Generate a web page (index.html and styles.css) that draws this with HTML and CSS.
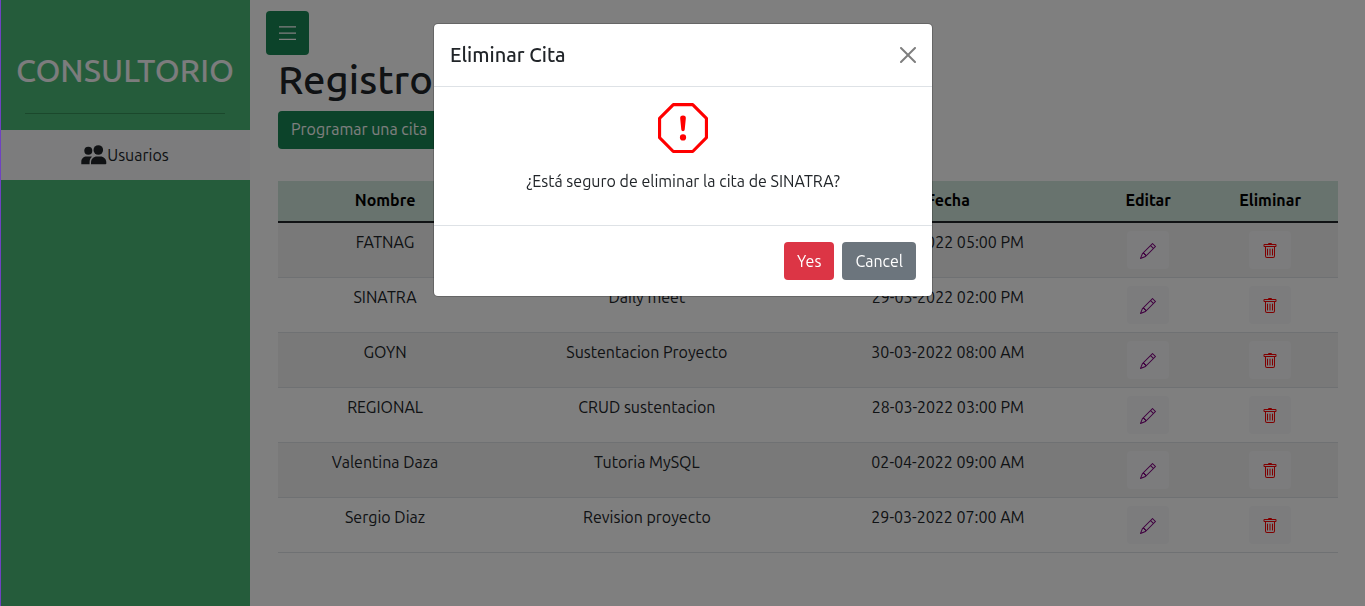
FILE: index.html
```
<!DOCTYPE html>
<html lang="es">
<head>
<meta charset="utf-8">
<meta name="viewport" content="width=device-width, initial-scale=1">
<title>Consultorio</title>
<link rel="stylesheet" href="styles.css">
</head>
<body>
<svg class="sprite" aria-hidden="true">
  <symbol id="pencil" viewBox="0 0 16 16"><path d="M12.146.146a.5.5 0 0 1 .708 0l3 3a.5.5 0 0 1 0 .708l-10 10a.5.5 0 0 1-.168.11l-5 2a.5.5 0 0 1-.65-.65l2-5a.5.5 0 0 1 .11-.168l10-10zM11.207 2.5 13.5 4.793 14.793 3.5 12.5 1.207 11.207 2.5zm1.586 3L10.5 3.207 4 9.707V10h.5a.5.5 0 0 1 .5.5v.5h.5a.5.5 0 0 1 .5.5v.5h.293l6.5-6.5zm-9.761 5.175-.106.106-1.528 3.821 3.821-1.528.106-.106A.5.5 0 0 1 5 12.5V12h-.5a.5.5 0 0 1-.5-.5V11h-.5a.5.5 0 0 1-.468-.325z"/></symbol>
  <symbol id="trash" viewBox="0 0 16 16"><path d="M5.500 5.500A.5.5 0 0 1 6 6v6a.5.5 0 0 1-1 0V6a.5.5 0 0 1 .5-.5zm2.500 0a.5.5 0 0 1 .5.5v6a.5.5 0 0 1-1 0V6a.5.5 0 0 1 .5-.5zm3 .5a.5.5 0 0 0-1 0v6a.5.5 0 0 0 1 0V6z"/><path fill-rule="evenodd" d="M14.500 3a1 1 0 0 1-1 1H13v9a2 2 0 0 1-2 2H5a2 2 0 0 1-2-2V4h-.5a1 1 0 0 1-1-1V2a1 1 0 0 1 1-1H6a1 1 0 0 1 1-1h2a1 1 0 0 1 1 1h3.500a1 1 0 0 1 1 1v1zM4.118 4 4 4.059V13a1 1 0 0 0 1 1h6a1 1 0 0 0 1-1V4.059L11.882 4H4.118zM2.500 3V2h11v1h-11z"/></symbol>
</svg>
<div class="layout">
  <aside class="sidebar">
    <div class="brand">
      <h2 class="brand-name">CONSULTORIO</h2>
      <hr class="brand-rule">
    </div>
    <nav>
      <a class="nav-item" href="#usuarios">
        <svg class="nav-icon" viewBox="0 0 26 20" aria-hidden="true"><circle cx="7.300" cy="5.800" r="4"/><circle cx="17.300" cy="5" r="4.800"/><path d="M.3 19.300v-2.600c0-3.200 2.300-5.200 5.400-5.200h3.600c.6 0 1.200.1 1.700.3-1.500 1.300-2.400 3.200-2.400 5.400v2.100Z"/><path d="M10 19.300v-1.800c0-3.500 2.600-5.900 6-5.900h3.300c3.400 0 6 2.400 6 5.900v1c0 .5-.4.8-.8.8Z"/></svg>
        <span>Usuarios</span>
      </a>
    </nav>
  </aside>
  <main class="content">
    <button class="btn btn-green menu-btn" type="button" aria-label="Menu">
      <svg class="menu-icon" viewBox="0 0 18 16" aria-hidden="true"><path d="M0 1.300h17v1.200H0zM0 7.500h17v1.200H0zM0 13.700h17v1.200H0z"/></svg>
    </button>
    <section class="records">
      <h1 class="page-title">Registro</h1>
      <button class="btn btn-green add-btn" type="button">Programar una cita</button>
      <table class="table">
        <colgroup><col class="c-name"><col class="c-reason"><col class="c-date"><col class="c-edit"><col class="c-delete"></colgroup>
        <thead><tr><th>Nombre</th><th>Motivo</th><th>Fecha</th><th>Editar</th><th>Eliminar</th></tr></thead>
        <tbody>
          <tr><td>FATNAG</td><td>Reunion</td><td>29-03-2022 05:00 PM</td><td><button class="btn btn-light edit" type="button" aria-label="Editar"><svg class="icon"><use href="#pencil"/></svg></button></td><td><button class="btn btn-light delete" type="button" aria-label="Eliminar"><svg class="icon"><use href="#trash"/></svg></button></td></tr>
          <tr><td>SINATRA</td><td>Daily meet</td><td>29-03-2022 02:00 PM</td><td><button class="btn btn-light edit" type="button" aria-label="Editar"><svg class="icon"><use href="#pencil"/></svg></button></td><td><button class="btn btn-light delete" type="button" aria-label="Eliminar"><svg class="icon"><use href="#trash"/></svg></button></td></tr>
          <tr><td>GOYN</td><td>Sustentacion Proyecto</td><td>30-03-2022 08:00 AM</td><td><button class="btn btn-light edit" type="button" aria-label="Editar"><svg class="icon"><use href="#pencil"/></svg></button></td><td><button class="btn btn-light delete" type="button" aria-label="Eliminar"><svg class="icon"><use href="#trash"/></svg></button></td></tr>
          <tr><td>REGIONAL</td><td>CRUD sustentacion</td><td>28-03-2022 03:00 PM</td><td><button class="btn btn-light edit" type="button" aria-label="Editar"><svg class="icon"><use href="#pencil"/></svg></button></td><td><button class="btn btn-light delete" type="button" aria-label="Eliminar"><svg class="icon"><use href="#trash"/></svg></button></td></tr>
          <tr><td>Valentina Daza</td><td>Tutoria MySQL</td><td>02-04-2022 09:00 AM</td><td><button class="btn btn-light edit" type="button" aria-label="Editar"><svg class="icon"><use href="#pencil"/></svg></button></td><td><button class="btn btn-light delete" type="button" aria-label="Eliminar"><svg class="icon"><use href="#trash"/></svg></button></td></tr>
          <tr><td>Sergio Diaz</td><td>Revision proyecto</td><td>29-03-2022 07:00 AM</td><td><button class="btn btn-light edit" type="button" aria-label="Editar"><svg class="icon"><use href="#pencil"/></svg></button></td><td><button class="btn btn-light delete" type="button" aria-label="Eliminar"><svg class="icon"><use href="#trash"/></svg></button></td></tr>
        </tbody>
      </table>
    </section>
  </main>
</div>
<div class="backdrop">
  <div class="modal" role="dialog" aria-modal="true" aria-labelledby="modal-title">
    <header class="modal-header">
      <h5 class="modal-title" id="modal-title">Eliminar Cita</h5>
      <button class="close" type="button" aria-label="Close"><svg class="icon" viewBox="0 0 16 16"><path d="M.293.293a1 1 0 0 1 1.414 0L8 6.586 14.293.293a1 1 0 1 1 1.414 1.414L9.414 8l6.293 6.293a1 1 0 0 1-1.414 1.414L8 9.414l-6.293 6.293a1 1 0 0 1-1.414-1.414L6.586 8 .293 1.707a1 1 0 0 1 0-1.414z"/></svg></button>
    </header>
    <div class="modal-body">
      <svg class="alert-icon" viewBox="0 0 16 16" aria-hidden="true"><path d="M4.540.146A.5.5 0 0 1 4.893 0h6.214a.5.5 0 0 1 .353.146l4.394 4.394a.5.5 0 0 1 .146.353v6.214a.5.5 0 0 1-.146.353l-4.394 4.394a.5.5 0 0 1-.353.146H4.893a.5.5 0 0 1-.353-.146L.146 11.460A.5.5 0 0 1 0 11.107V4.893a.5.5 0 0 1 .146-.353L4.540.146zM5.100 1 1 5.100v5.800L5.100 15h5.800l4.100-4.100V5.100L10.900 1H5.100z"/><path d="M7.002 11a1 1 0 1 1 2 0 1 1 0 0 1-2 0zM7.100 4.995a.905.905 0 1 1 1.800 0l-.350 3.507a.552.552 0 0 1-1.100 0L7.100 4.995z"/></svg>
      <p class="message">¿Está seguro de eliminar la cita de SINATRA?</p>
    </div>
    <footer class="modal-footer">
      <button class="btn btn-danger" type="button">Yes</button>
      <button class="btn btn-secondary" type="button">Cancel</button>
    </footer>
  </div>
</div>
</body>
</html>
```
FILE: styles.css
```
*, *::before, *::after { box-sizing: border-box; }
body {
  margin: 0;
  font: 400 16px/24px Ubuntu, "Noto Sans", "Open Sans", sans-serif;
  color: #212529;
  background: #fff;
}
h1, h2, h5, p { margin: 0; }
.sprite { display: none; }
.icon { display: block; width: 16px; height: 16px; fill: currentColor; }

.layout { display: flex; min-height: 100vh; }
.sidebar { flex: 0 0 250px; background: #4ab876; }
.brand { display: flex; flex-direction: column; gap: 24px; padding: 51px 0 16px; }
.brand-name { color: #f8f9fa; font-size: 32px; font-weight: 550; line-height: 38px; text-align: center; }
.brand-rule { width: 200px; height: 1px; margin: 0 auto; border: 0; background: #379058; }
.nav-item {
  display: flex; align-items: center; justify-content: center;
  height: 50px; background: #f8f9fa; color: #212529; text-decoration: none;
}
.nav-icon { width: 26px; height: 20px; fill: currentColor; }

.content { flex: 1; min-width: 0; padding: 11px 27px 16px 16px; }
.records { padding: 1px 0 0 12px; }
.page-title { margin-bottom: 7px; font-size: 40px; font-weight: 550; line-height: 48px; }

.btn {
  padding: 6px 12px; border: 1px solid transparent; border-radius: 4px;
  font: inherit; color: #fff; cursor: pointer;
}
.btn-green { background: #198754; }
.add-btn { padding: 5px 12px 7px; }
.btn-danger { background: #dc3545; }
.btn-secondary { background: #6c757d; }
.btn-light { display: block; height: 38px; margin: 1px auto 0; padding: 8px 12px 6px; background: #f8f9fa; }
.edit { color: purple; }
.delete { color: red; }
.menu-btn { display: block; width: 43px; height: 44px; padding: 0; }
.menu-icon { display: block; width: 18px; height: 16px; margin: 0 auto; fill: #fff; }

.table { width: 100%; margin-top: 32px; border-collapse: collapse; table-layout: fixed; text-align: center; }
.c-name { width: 20.2%; }
.c-reason { width: 29.2%; }
.c-date { width: 27.6%; }
.c-edit { width: 10.2%; }
.c-delete { width: 12.8%; }
.table th { height: 41px; padding: 7px 8px 8px; vertical-align: top; background: #d1e7dd; color: #000; font-weight: 700; line-height: 24px; border-bottom: 2px solid #212529; }
.table td { height: 55px; padding: 7px 8px; vertical-align: top; border-bottom: 1px solid #dee2e6; }
.table tbody tr:nth-child(odd) { background: #f2f2f2; }

.backdrop {
  position: fixed; inset: 0; padding: 23px 16px;
  background: rgba(0, 0, 0, .5); border-left: 1px solid #6f42c1;
}
.modal {
  max-width: 500px; margin: 0 auto; background: #fff; background-clip: padding-box;
  border: 1px solid rgba(0, 0, 0, .2); border-radius: 5px;
}
.modal-header { display: flex; align-items: center; justify-content: space-between; padding: 16px; border-bottom: 1px solid #dee2e6; }
.modal-title { font-size: 20px; font-weight: 550; line-height: 30px; }
.close { padding: 8px; margin: -8px -8px -8px 0; border: 0; background: none; color: #000; opacity: .5; cursor: pointer; }
.modal-body { display: flex; flex-direction: column; align-items: center; gap: 16px; padding: 16px 16px 32px; }
.alert-icon { width: 50px; height: 50px; fill: red; }
.modal-footer { display: flex; justify-content: flex-end; gap: 8px; padding: 16px; border-top: 1px solid #dee2e6; }
```
